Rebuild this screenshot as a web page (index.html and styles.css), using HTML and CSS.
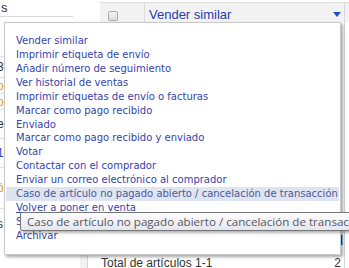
FILE: index.html
```html
<!DOCTYPE html>
<html lang="es">
<head>
<meta charset="utf-8">
<link rel="stylesheet" href="styles.css">
</head>
<body>
<div class="page">
  <div class="lhead"><span class="lh-text">s</span></div>
  <div class="th">
    <div class="th-check"><span class="cb"></span></div>
    <div class="th-action"><span class="th-label">Vender similar</span><span class="caret"></span></div>
  </div>
  <div class="th-end"></div>

  <div class="lcol">
    <div class="lrow r1"></div>
    <div class="lrow r2"><span class="bit dark">3</span></div>
    <div class="lrow r3"><span class="bit orange">o</span></div>
    <div class="lrow r4"><span class="bit orange">o</span></div>
    <div class="lrow r5"><span class="bit dark">e</span></div>
    <div class="lrow r6"><span class="bit blue">1</span></div>
    <div class="lrow r7"><span class="bit orange">ó</span></div>
    <div class="lrow r8"><span class="bit dark">s</span></div>
  </div>
  <div class="mcol"><span class="mark">]</span></div>
  <div class="rcol"></div>

  <div class="lfoot"><span class="lf-cell"></span></div>
  <div class="mfoot"><span>Total de artículos 1-1</span><span>2</span></div>
  <div class="rfoot"></div>
</div>

<ul class="menu">
  <li>Vender similar</li>
  <li>Imprimir etiqueta de envío</li>
  <li>Añadir número de seguimiento</li>
  <li>Ver historial de ventas</li>
  <li>Imprimir etiquetas de envío o facturas</li>
  <li>Marcar como pago recibido</li>
  <li>Enviado</li>
  <li>Marcar como pago recibido y enviado</li>
  <li>Votar</li>
  <li>Contactar con el comprador</li>
  <li>Enviar un correo electrónico al comprador</li>
  <li class="hover">Caso de artículo no pagado abierto / cancelación de transacción</li>
  <li class="visited">Volver a poner en venta</li>
  <li>Suprimir</li>
  <li>Archivar</li>
</ul>

<div class="tip">Caso de artículo no pagado abierto / cancelación de transacción</div>
</body>
</html>
```

FILE: styles.css
```css
html, body {
  margin: 0;
  padding: 0;
  background: #fff;
}
body {
  width: 349px;
  height: 268px;
  overflow: hidden;
  position: relative;
  font-family: "Liberation Sans", Arial, sans-serif;
}
.page {
  width: 349px;
  height: 268px;
  display: grid;
  grid-template-columns: 100px 244px 5px;
  grid-template-rows: 22px 233px 13px;
}
.lhead {
  position: relative;
}
.lh-text {
  display: block;
  width: 73px;
  height: 17px;
  border-bottom: 1px solid #dcdcdc;
  font-size: 13px;
  line-height: 15px;
  color: #333;
  padding-left: 1px;
  box-sizing: border-box;
}
.th {
  margin-top: 2px;
  border-top: 1px solid #dcdcdc;
  background: #f2f2f2;
  display: flex;
}
.th-check {
  width: 45px;
  border-right: 1px solid #dcdcdc;
  padding: 8px 0 0 8px;
  box-sizing: border-box;
}
.cb {
  display: block;
  width: 10px;
  height: 10px;
  border: 1px solid #a9a9a9;
  border-radius: 2px;
  background: linear-gradient(#f4f4f4, #dedede);
  box-sizing: border-box;
}
.th-action {
  flex: 1;
  display: flex;
  align-items: center;
  padding: 0 3px 0 4px;
}
.th-label {
  font-size: 13px;
  color: #2b3ab0;
  margin-top: 3px;
}
.caret {
  margin-left: auto;
  margin-top: 4px;
  width: 0;
  height: 0;
  border-left: 4px solid transparent;
  border-right: 4px solid transparent;
  border-top: 5px solid #1f4fc2;
}
.th-end {
  margin-top: 2px;
  border-top: 1px solid #dcdcdc;
  border-left: 1px solid #d6d6d6;
  background: #f2f2f2;
}
.lcol {
  display: flex;
  flex-direction: column;
}
.lrow {
  border-bottom: 1px solid #e2e2e2;
  font-size: 12px;
  line-height: 14px;
  display: flex;
  align-items: center;
  overflow: hidden;
}
.r1 { height: 34px; }
.r2 { height: 20px; }
.r3 { height: 15px; }
.r4 { height: 15px; }
.r5 { height: 28px; }
.r6 { height: 28px; }
.r7 { height: 40px; }
.r8 { height: 30px; border-bottom: 0; }
.bit {
  margin-left: -3px;
}
.dark { color: #333; }
.orange { color: #e8a000; }
.blue { color: #2b4ab0; }
.mcol {
  position: relative;
  display: flex;
  justify-content: flex-end;
  align-items: flex-end;
  padding-bottom: 10px;
}
.mark {
  font-size: 11px;
  color: #223388;
  font-weight: bold;
  margin-right: 1px;
}
.rcol {
  border-left: 1px solid #d6d6d6;
}
.lfoot {
  display: flex;
  justify-content: flex-end;
}
.lf-cell {
  width: 7px;
  background: #f2f2f2;
  border-right: 1px solid #d6d6d6;
  margin-right: 12px;
}
.mfoot {
  display: flex;
  justify-content: space-between;
  font-size: 12px;
  line-height: 14px;
  color: #333;
  padding: 1px 3px 0 1px;
}
.rfoot {
  border-left: 1px solid #d6d6d6;
}

.menu {
  position: absolute;
  left: 4px;
  top: 22px;
  width: 337px;
  height: 233px;
  box-sizing: border-box;
  margin: 0;
  padding: 11px 1px 0 1px;
  list-style: none;
  background: #fff;
  border: 1px solid #c9c9c9;
  box-shadow: 2px 2px 3px rgba(0, 0, 0, 0.35);
  font-family: "DejaVu Sans", Verdana, sans-serif;
  font-size: 10px;
}
.menu li {
  height: 13.93px;
  line-height: 13.93px;
  padding-left: 10px;
  color: #3444aa;
  white-space: nowrap;
}
.menu li.hover {
  background: #dfe4f1;
  color: #4a5a9a;
}
.menu li.visited {
  text-decoration: underline;
}
.tip {
  position: absolute;
  left: 20px;
  top: 212px;
  width: 360px;
  height: 19px;
  box-sizing: border-box;
  padding-left: 6px;
  border: 1px solid #767676;
  border-radius: 2px;
  background: linear-gradient(#ffffff, #e4e5f0);
  box-shadow: 2px 2px 3px rgba(0, 0, 0, 0.3);
  font-family: "Open Sans", sans-serif;
  font-size: 11.6px;
  line-height: 17px;
  color: #575757;
  white-space: nowrap;
}
```
